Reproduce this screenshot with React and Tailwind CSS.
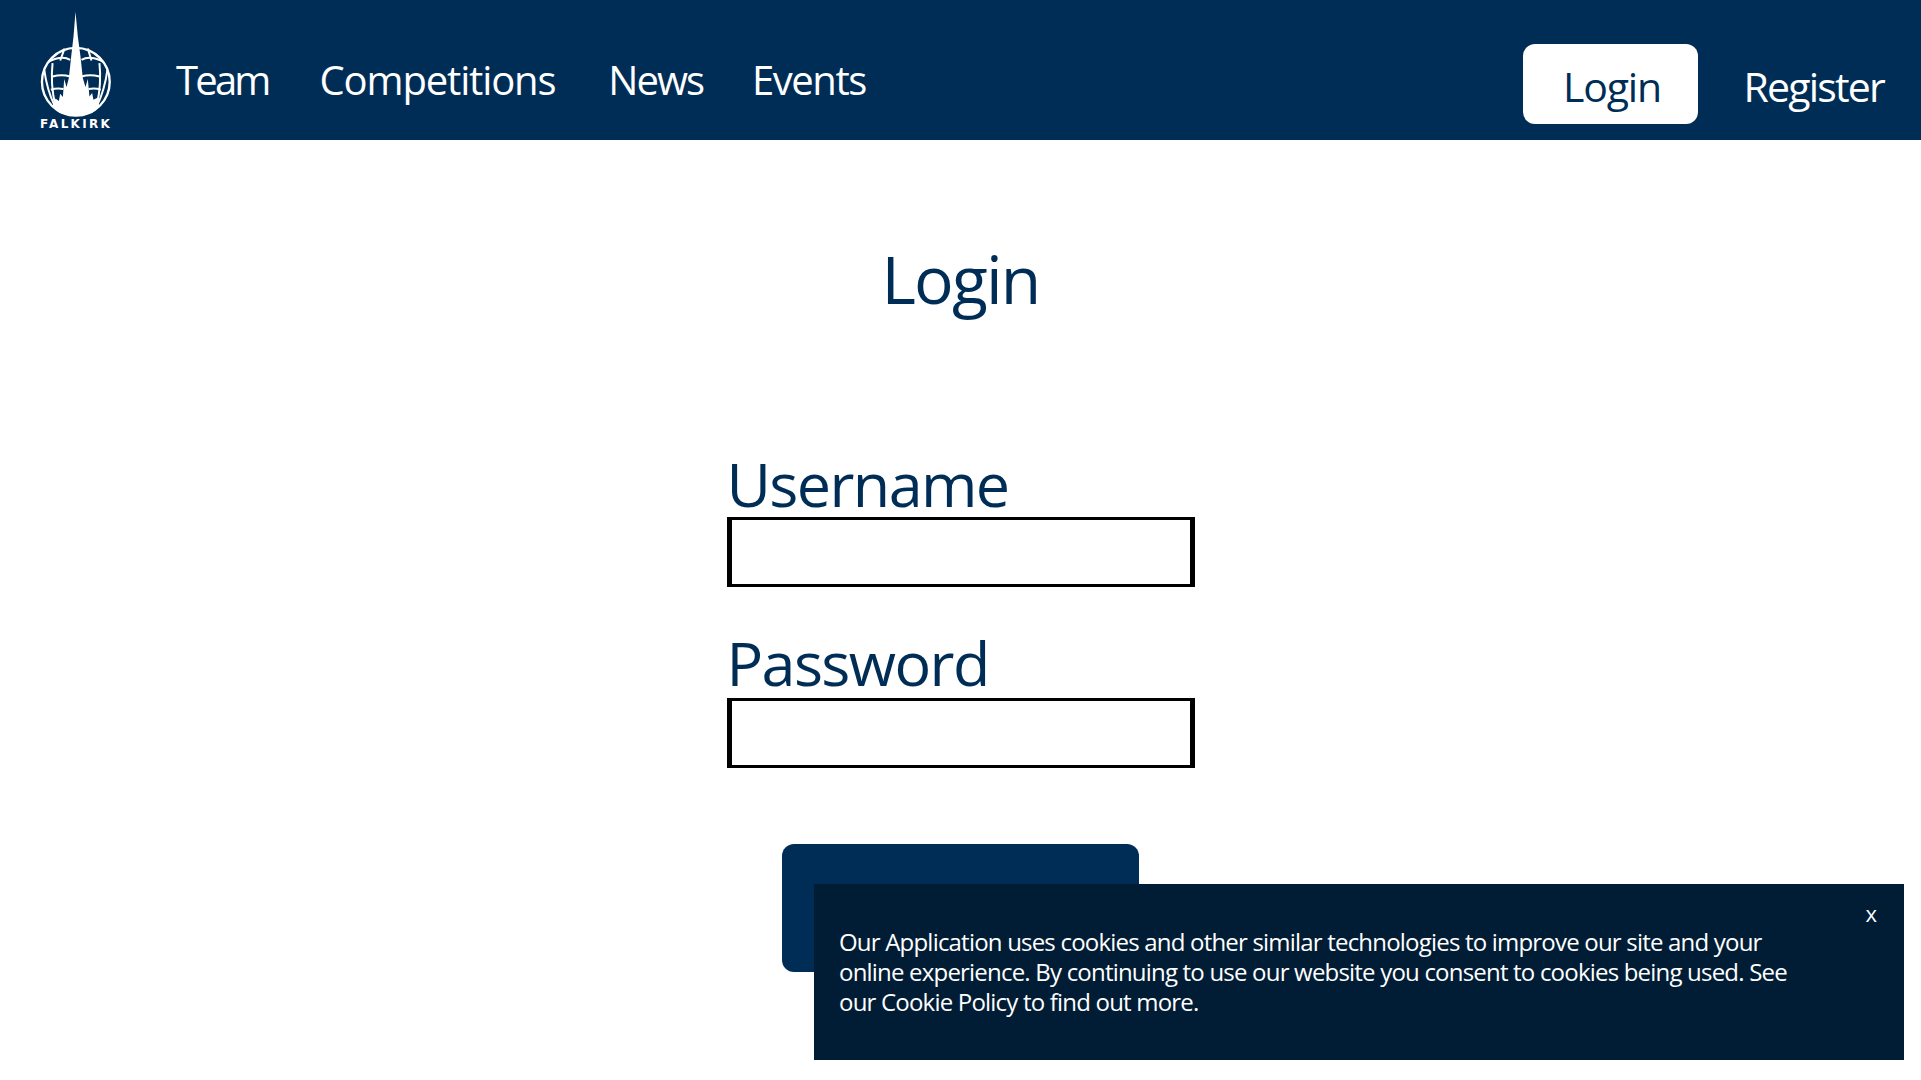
import React from "react";

const FONT = "font-['Open_Sans','Noto_Sans',sans-serif]";

function Logo() {
  return (
    <div className="flex flex-col items-center w-[72px]">
      <svg viewBox="60 30 215 325" className="w-[72px] h-[108px] shrink-0" fill="none">
        <circle cx="167" cy="246" r="102" stroke="#fff" strokeWidth="7" />
        <g stroke="#fff" strokeWidth="6">
          <path d="M84 186 Q125 165 150 180 M250 186 Q210 165 184 180" />
          <path d="M133 146 L120 182 M203 146 L214 182" />
          <path d="M97 190 Q90 250 105 318 M238 190 Q245 250 230 318" />
          <path d="M97 230 Q125 222 150 230 M238 230 Q210 222 184 230" />
          <path d="M92 270 Q110 264 130 268 M242 270 Q225 264 205 268" />
          <path d="M72 210 Q80 270 104 320 M262 210 Q254 270 230 320" />
        </g>
        <path
          d="M166 35 L173 110 L181 170 L188 235 L196 262 L203 238 L208 290 L216 280 L220 300 L232 294 L238 322 L216 340 Q167 356 118 340 L96 322 L106 296 L116 304 L120 282 L128 292 L132 238 L139 262 L146 235 L153 170 L160 110 Z"
          fill="#fff"
        />
      </svg>
      <span className="text-[12px] leading-[12px] font-bold tracking-[2.3px] text-white font-['DejaVu_Sans',sans-serif] whitespace-nowrap">
        FALKIRK
      </span>
    </div>
  );
}

function NavLink({ children, className = "" }) {
  return <a className={`text-[40px] leading-[50px] text-white ${className}`}>{children}</a>;
}

function Field({ label, className = "", labelClass = "" }) {
  return (
    <div className={`flex flex-col w-[468px] ${className}`}>
      <label className={`text-[61px] text-[#002d56] tracking-[-1.6px] ${labelClass}`}>{label}</label>
      <input className="block w-[468px] h-[70px] border-x-[5px] border-y-[3px] border-black bg-white" />
    </div>
  );
}

export default function App() {
  return (
    <div className={`relative min-h-[1080px] bg-white ${FONT}`}>
      <header className="flex items-start h-[140px] bg-[#002d56] pl-[40px] pr-[37px]">
        <div className="pt-[10px]">
          <Logo />
        </div>
        <nav className="flex items-center ml-[64px] h-[160px]">
          <NavLink className="tracking-[-2.8px]">Team</NavLink>
          <NavLink className="ml-[51px] tracking-[-1.15px]">Competitions</NavLink>
          <NavLink className="ml-[53px] tracking-[-2px]">News</NavLink>
          <NavLink className="ml-[49px] tracking-[-1.45px]">Events</NavLink>
        </nav>
        <div className="flex items-center ml-auto mt-[44px] gap-[46px]">
          <a className="flex items-center justify-center w-[175px] h-[80px] pt-[6px] pl-[4px] rounded-[12px] bg-white text-[#002d56] text-[41px] tracking-[-1.2px]">
            Login
          </a>
          <a className="pt-[6px] text-[41px] text-white tracking-[-1.8px]">Register</a>
        </div>
      </header>
      <main className="flex flex-col items-center">
        <h1 className="mt-[100px] text-[66px] leading-[76px] text-[#002d56] font-normal tracking-[-1.8px]">Login</h1>
        <Field label="Username" labelClass="leading-[66px]" className="mt-[135px]" />
        <Field label="Password" labelClass="leading-[71px]" className="mt-[40px]" />
        <button className="mt-[76px] w-[357px] h-[128px] rounded-[12px] bg-[#002d56]" />
      </main>
      <div className="absolute left-[814px] top-[884px] w-[1090px] h-[176px] bg-[#011d36] text-white pl-[25px] pr-[100px] pt-[43px]">
        <button className="absolute right-[27px] top-[14px] text-[22px] leading-[30px]">x</button>
        <p className="text-[24px] leading-[30px] tracking-[-0.8px]">
          Our Application uses cookies and other similar technologies to improve our site and your online experience. By
          continuing to use our website you consent to cookies being used. See our Cookie Policy to find out more.
        </p>
      </div>
    </div>
  );
}
